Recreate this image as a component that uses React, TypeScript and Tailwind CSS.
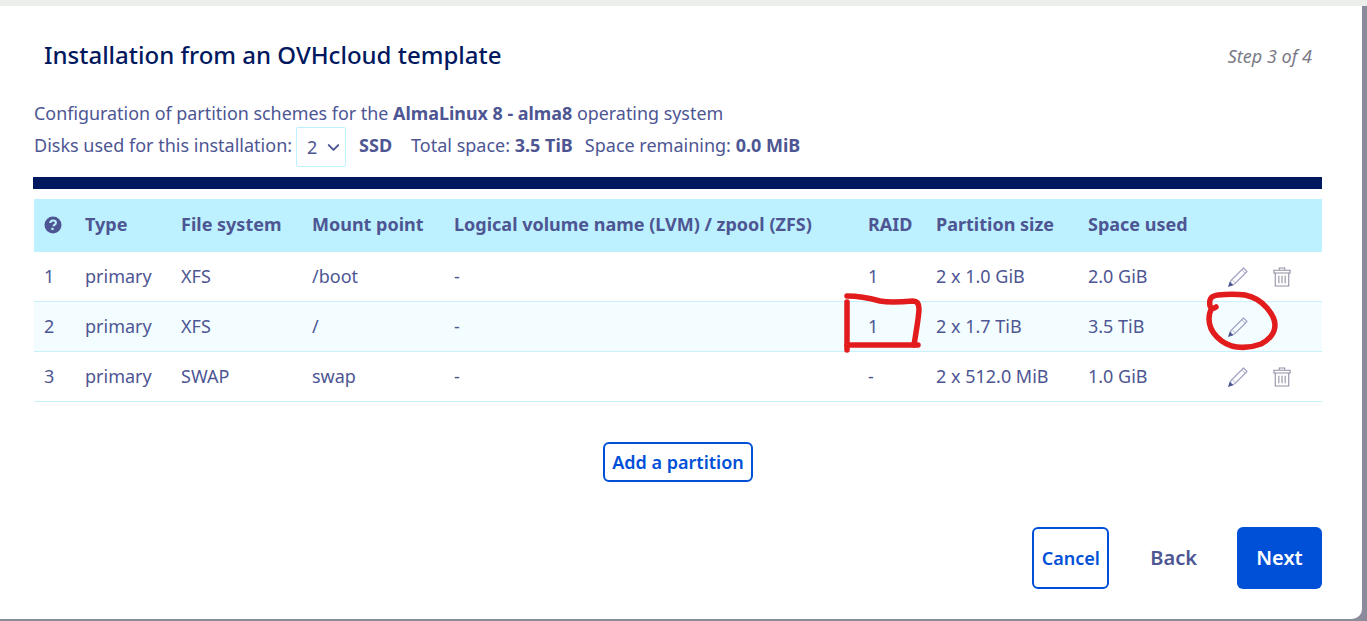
import { ChevronDown } from "lucide-react";

const rows = [
  { id: 1, fs: "XFS", mount: "/boot", raid: "1", size: "2 x 1.0 GiB", used: "2.0 GiB", del: true },
  { id: 2, fs: "XFS", mount: "/", raid: "1", size: "2 x 1.7 TiB", used: "3.5 TiB", del: false },
  { id: 3, fs: "SWAP", mount: "swap", raid: "-", size: "2 x 512.0 MiB", used: "1.0 GiB", del: true },
];

function Pencil() {
  return (
    <svg width="22" height="22" viewBox="0 0 22 22" fill="none" strokeLinejoin="round">
      <path d="M4 14.500 16.500 2l3.500 3.500-12.500 12.500-4.500 1z" stroke="#a3a3c4" strokeWidth="1.200" />
      <path d="M14.800 3.800l3.500 3.500M5 13.500l3.500 3.500" stroke="#b5b5d0" strokeWidth="1" />
      <path d="M1 21l1.700-5.500 3.800 3.800z" fill="#4d5693" />
    </svg>
  );
}

function Trash() {
  return (
    <svg width="18" height="20" viewBox="0 0 20 22" fill="none" stroke="#8f8fa3" strokeWidth="1.200">
      <path d="M7 3V1h6v2" />
      <path d="M1 3.500h18v3H1z" />
      <path d="M2.500 6.500v14.500h15V6.500" />
      <path d="M6.500 9.500v8.500M10 9.500v8.500M13.500 9.500v8.500" />
    </svg>
  );
}

export default function App() {
  return (
    <div className="flex h-[621px] w-[1367px] flex-col overflow-hidden bg-[#8b8b9c] font-['Noto_Sans',sans-serif] text-[#4d5693]">
      <div className="h-[6px] shrink-0 bg-[#eceeec]" />
      <div className="relative flex h-[613px] w-[1362px] flex-col rounded-br-[10px] bg-white pl-[34px] pr-[40px]">
        <div className="flex h-[77px] shrink-0 items-end justify-between pb-[12px] pl-[10px] pr-[10px]">
          <h1 className="text-[24px] font-medium leading-[32px] text-[#00185e]">
            Installation from an OVHcloud template
          </h1>
          <span className="text-[18px] italic leading-[30px] text-[#7a7a85]">Step 3 of 4</span>
        </div>
        <p className="mt-[14px] h-[30px] shrink-0 text-[17.9px] leading-[32px]">
          Configuration of partition schemes for the <b className="font-bold">AlmaLinux 8 - alma8</b> operating system
        </p>
        <div className="flex h-[40px] shrink-0 items-center text-[18px]">
          <span className="-mt-[3px]">Disks used for this installation:</span>
          <span className="ml-[4px] flex h-[40px] w-[50px] items-center justify-between rounded-[2px] border border-[#bef1ff] pl-[10px] pr-[2px] text-[18px]">
            2
            <ChevronDown size={19} strokeWidth={2.5} />
          </span>
          <div className="-mt-[3px] flex items-center">
            <b className="ml-[13px] font-bold">SSD</b>
            <span className="ml-[19px]">
              Total space: <b className="font-bold">3.5 TiB</b>
            </span>
            <span className="ml-[12px]">
              Space remaining: <b className="font-bold">0.0 MiB</b>
            </span>
          </div>
        </div>
        <div className="-ml-px mt-[10px] h-[12px] w-[1289px] shrink-0 bg-[#00185e]" />
        <table className="mt-[10px] w-[1288px] table-fixed border-separate border-spacing-0 text-left text-[18px]">
          <thead>
            <tr className="h-[53px] bg-[#bef1ff] font-bold">
              <th className="w-[51px] pl-[10px]">
                <svg width="18" height="18" viewBox="0 0 18 18" className="-mt-[2px]">
                  <circle cx="9" cy="9" r="8.500" fill="#4d5693" />
                  <path d="M6.200 7c.1-1.700 1.300-2.600 2.900-2.600 1.600 0 2.800.9 2.800 2.300 0 1.200-.7 1.700-1.500 2.200-.6.400-.9.700-.9 1.400" fill="none" stroke="#bef1ff" strokeWidth="2" />
                  <rect x="7.400" y="11.800" width="2.200" height="2.200" fill="#bef1ff" />
                </svg>
              </th>
              <th className="w-[96px] pb-[2px] font-bold">Type</th>
              <th className="w-[131px] pb-[2px] font-bold">File system</th>
              <th className="w-[142px] pb-[2px] font-bold">Mount point</th>
              <th className="w-[414px] pb-[2px] font-bold">Logical volume name (LVM) / zpool (ZFS)</th>
              <th className="w-[68px] pb-[2px] font-bold">RAID</th>
              <th className="w-[152px] pb-[2px] font-bold">Partition size</th>
              <th className="w-[140px] pb-[2px] font-bold">Space used</th>
              <th />
            </tr>
          </thead>
          <tbody>
            {rows.map((row) => (
              <tr
                key={row.id}
                className={`h-[50px] [&>td]:border-b [&>td]:border-[#c9f1fb] ${row.id === 2 ? "bg-[#f3fdff]" : ""}`}
              >
                <td className="pl-[10px]">{row.id}</td>
                <td>primary</td>
                <td>{row.fs}</td>
                <td>{row.mount}</td>
                <td>-</td>
                <td>{row.raid}</td>
                <td>{row.size}</td>
                <td>{row.used}</td>
                <td>
                  <div className="-ml-[1px] flex items-center gap-[24px]">
                    <Pencil />
                    {row.del && <Trash />}
                  </div>
                </td>
              </tr>
            ))}
          </tbody>
        </table>
        <div className="mt-[40px] flex shrink-0 justify-center">
          <button className="h-[40px] w-[150px] rounded-[6px] border-2 border-[#0050d7] pt-[1px] text-[18px] font-semibold text-[#0050d7]">
            Add a partition
          </button>
        </div>
        <div className="mt-[45px] flex shrink-0 items-center justify-end">
          <button className="h-[62px] w-[77px] rounded-[6px] border-2 border-[#0050d7] pt-[1px] text-[18px] font-semibold text-[#0050d7]">
            Cancel
          </button>
          <button className="ml-[41px] text-[20px] font-semibold">Back</button>
          <button className="ml-[40px] h-[62px] w-[85px] rounded-[6px] bg-[#0050d7] text-[20px] font-semibold text-white">
            Next
          </button>
        </div>
        {/* hand-drawn markup on top of the screenshot */}
        <svg className="pointer-events-none absolute left-0 top-0" width="1362" height="613" fill="none" stroke="#e21c1c" strokeWidth="5.500" strokeLinecap="round" strokeLinejoin="round">
          <path d="M847 290c12 0 22 2 33 5 10 2 22 1 33 0 4 0 6 3 6 8 0 6-3 24-5 36" />
          <path d="M847 296v48" />
          <path d="M847 339h71" />
          <path d="M1216 301c-3 2-5 2-6-1-1-6 0-10 8-11 9-1 19-1 27 0 10 2 17 7 22 13 5 6 8 12 8 17 0 8-6 15-14 19-8 3-16 4-24 3-8-1-14-4-20-10-5-5-8-12-8-18 0-4 1-8 3-11" />
        </svg>
      </div>
    </div>
  );
}
